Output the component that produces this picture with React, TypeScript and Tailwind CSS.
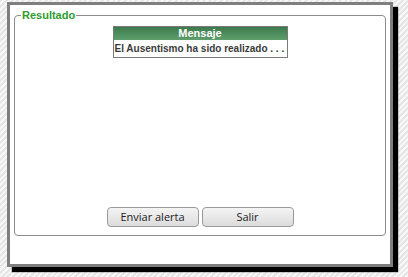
export default function App() {
  return (
    <div className="w-[408px] h-[277px] overflow-hidden pl-[7px] pt-[2px] bg-[repeating-linear-gradient(135deg,#e6e6e6_0px,#e6e6e6_2px,#f7f7f7_2px,#f7f7f7_4px)]">
      <div className="w-[386px] h-[265px] border-[3px] border-[#7f7f7f] bg-white shadow-[5px_5px_1px_#000] pl-[4px] pt-[4px]">
        <fieldset className="w-[372px] h-[227px] border border-[#8c8c8c] rounded-[4px] px-0 flex flex-col items-center">
          <legend className="ml-[6px] px-[1px] text-[11px] leading-[13px] font-bold text-[#2f9c2f] font-['Liberation_Sans',sans-serif]">
            Resultado
          </legend>
          <div className="mt-[4px] w-[175px] border border-[#7a7a7a] font-['Liberation_Sans',sans-serif]">
            <div className="h-[13px] bg-[linear-gradient(#3c7a4c,#5f9f6d)] text-white text-[11px] leading-[13px] font-bold text-center">
              Mensaje
            </div>
            <div className="h-[17px] bg-white text-[#3a3a3a] text-[10px] leading-[17px] font-bold pl-[1px] whitespace-nowrap">
              El Ausentismo ha sido realizado . . .
            </div>
          </div>
          <div className="mt-auto mb-[8px] flex gap-[3px] font-['Open_Sans',sans-serif] text-[11px] text-[#222]">
            <button className="w-[92px] h-[20px] rounded-[4px] border border-[#9a9a9a] bg-[linear-gradient(#f4f4f4,#dcdcdc)]">
              Enviar alerta
            </button>
            <button className="w-[92px] h-[20px] rounded-[4px] border border-[#9a9a9a] bg-[linear-gradient(#f4f4f4,#dcdcdc)]">
              Salir
            </button>
          </div>
        </fieldset>
      </div>
    </div>
  );
}
